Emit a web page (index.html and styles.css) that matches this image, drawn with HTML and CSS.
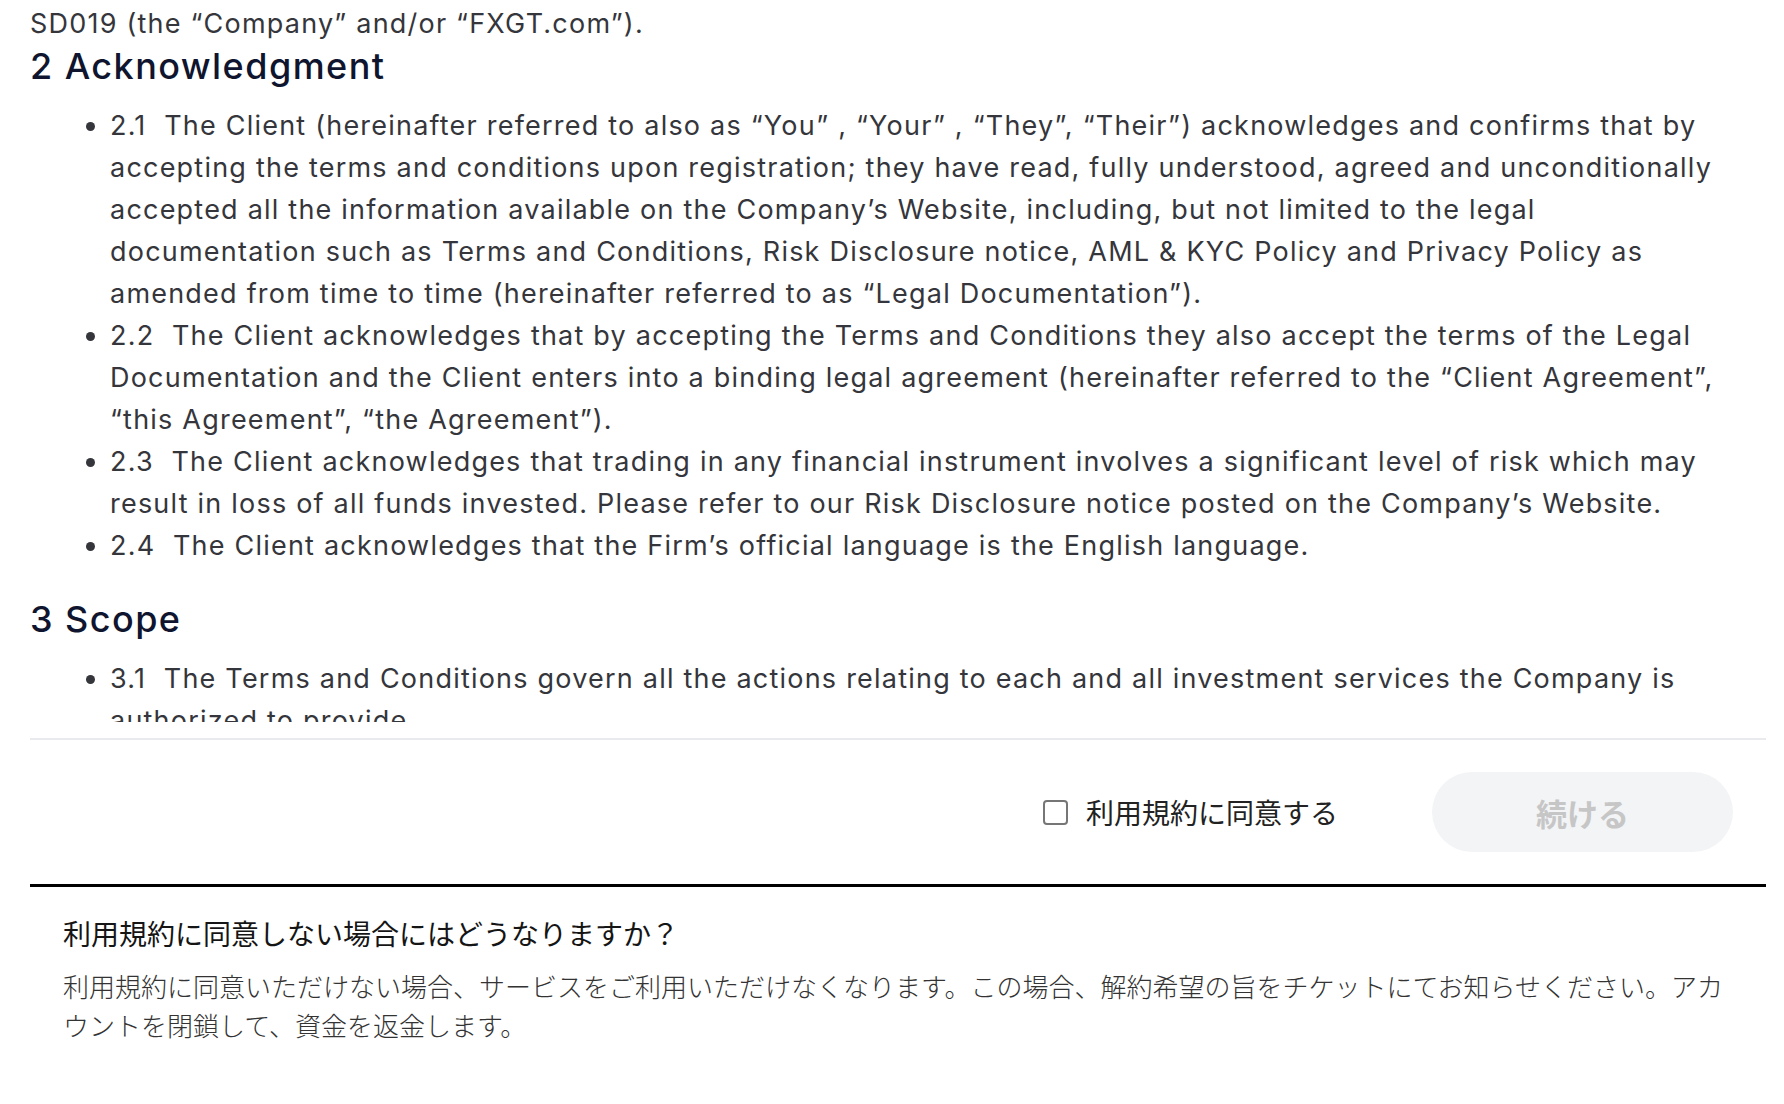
FILE: index.html
```html
<!DOCTYPE html>
<html lang="ja">
<head>
    <meta charset="UTF-8">
    <meta name="viewport" content="width=device-width, initial-scale=1.0">
    <title>Terms and Conditions</title>
    <link rel="stylesheet" href="styles.css">
</head>
<body>
<div class="page">

    <div class="terms-box">
        <p class="lead">SD019 (the “Company” and/or “FXGT.com”).</p>

        <h2>2 Acknowledgment</h2>
        <ul>
            <li>2.1&nbsp; The Client (hereinafter referred to also as “You” , “Your” , “They”, “Their”) acknowledges and confirms that by accepting the terms and conditions upon registration; they have read, fully understood, agreed and unconditionally accepted all the information available on the Company’s Website, including, but not limited to the legal documentation such as Terms and Conditions, Risk Disclosure notice, AML &amp; KYC Policy and Privacy Policy as amended from time to time (hereinafter referred to as “Legal Documentation”).</li>
            <li>2.2&nbsp; The Client acknowledges that by accepting the Terms and Conditions they also accept the terms of the Legal Documentation and the Client enters into a binding legal agreement (hereinafter referred to the “Client Agreement”, “this Agreement”, “the Agreement”).</li>
            <li>2.3&nbsp; The Client acknowledges that trading in any financial instrument involves a significant level of risk which may result in loss of all funds invested. Please refer to our Risk Disclosure notice posted on the Company’s Website.</li>
            <li>2.4&nbsp; The Client acknowledges that the Firm’s official language is the English language.</li>
        </ul>

        <h2>3 Scope</h2>
        <ul>
            <li>3.1&nbsp; The Terms and Conditions govern all the actions relating to each and all investment services the Company is authorized to provide.</li>
            <li>3.2&nbsp; The Client accepts that the Terms and Conditions apply to every transaction made through the Company’s platforms.</li>
        </ul>
    </div>

    <div class="agree-bar">
        <label class="agree">
            <input type="checkbox" class="agree-check">
            <span>利用規約に同意する</span>
        </label>
        <button class="continue-btn" disabled>続ける</button>
    </div>

    <div class="faq">
        <h3>利用規約に同意しない場合にはどうなりますか？</h3>
        <p>利用規約に同意いただけない場合、サービスをご利用いただけなくなります。この場合、解約希望の旨をチケットにてお知らせください。アカウントを閉鎖して、資金を返金します。</p>
    </div>

</div>
</body>
</html>
```
FILE: styles.css
```css
/* Base */
body {
    margin: 0;
    padding: 0;
    background: #fff;
    font-family: "Inter", "Noto Sans CJK JP", sans-serif;
}

.page {
    padding: 0 18px 0 30px;
}

/* Scrollable terms text (clipped) */
.terms-box {
    height: 719px;
    padding: 3px 33px 0 0;
    overflow: hidden;
    color: #35363b;
    font-size: 27px;
    line-height: 42px;
    letter-spacing: 0.045em;
}

.terms-box .lead {
    margin: 0;
}

.terms-box h2 {
    margin: 31px 0 0;
    font-size: 36px;
    line-height: 43px;
    font-weight: 500;
    letter-spacing: 0.04em;
    color: #0f152e;
}

.terms-box .lead + h2 {
    margin-top: 0;
}

.terms-box ul {
    margin: 17px 0 0;
    padding-left: 80px;
    list-style: disc;
}

/* Agree row */
.agree-bar {
    margin-top: 16px;
    border-top: 2px solid #e8eaed;
    padding: 32px 33px 32px 0;
    display: flex;
    justify-content: flex-end;
    align-items: center;
}

.agree {
    display: flex;
    align-items: center;
    gap: 18px;
    margin-right: 94px;
    font-family: "Noto Sans CJK JP", sans-serif;
    font-size: 28px;
    color: #222;
    cursor: pointer;
}

.agree-check {
    appearance: none;
    margin: 0;
    width: 25px;
    height: 25px;
    border: 2px solid #767676;
    border-radius: 4px;
    background: #fff;
}

.continue-btn {
    width: 301px;
    height: 80px;
    border: none;
    border-radius: 40px;
    background-color: #f3f4f6;
    color: #c6c6c6;
    font-family: "Noto Sans CJK JP", sans-serif;
    font-size: 31px;
    font-weight: 700;
}

/* FAQ */
.faq {
    border-top: 3px solid #000;
    padding: 26px 33px 0;
    font-family: "Noto Sans CJK JP", sans-serif;
}

.faq h3 {
    margin: 0;
    font-size: 28px;
    line-height: 40px;
    font-weight: 400;
    color: #151515;
}

.faq p {
    margin: 13px 0 0;
    font-size: 26px;
    line-height: 39px;
    font-weight: 300;
    color: #333;
}
```
